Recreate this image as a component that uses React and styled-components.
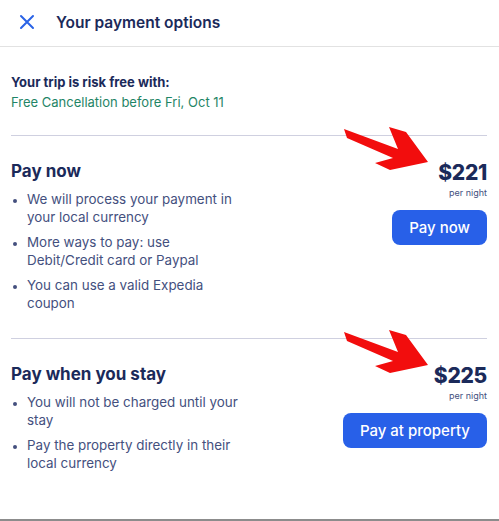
import React from "react";
import styled, { createGlobalStyle } from "styled-components";

const GlobalStyle = createGlobalStyle`
    html, body {
        margin: 0;
        padding: 0;
        background: #ffffff;
    }
    body {
        font-family: "Inter", "Noto Sans", sans-serif;
        -webkit-font-smoothing: antialiased;
    }
`;

const options = [
    {
        title: "Pay now",
        price: "$221",
        button: "Pay now",
        points: [
            "We will process your payment in your local currency",
            "More ways to pay: use Debit/Credit card or Paypal",
            "You can use a valid Expedia coupon",
        ],
    },
    {
        title: "Pay when you stay",
        price: "$225",
        button: "Pay at property",
        points: [
            "You will not be charged until your stay",
            "Pay the property directly in their local currency",
        ],
    },
];

const Arrow = () => (
    <ArrowSvg viewBox="0 0 86 44" width="86" height="44">
        <polygon
            points="0,2 54,22 45,0 62,5 84,35 46,43 31,36 49,31 3,11"
            fill="#f20d0d"
        />
    </ArrowSvg>
);

const App = () => {
    return (
        <>
            <GlobalStyle />
            <PageStyle>
                <HeaderStyle>
                    <CloseButtonStyle aria-label="Close">
                        <svg width="16" height="16" viewBox="0 0 16 16">
                            <path d="M2 2 L14 14 M14 2 L2 14" stroke="#2a63e6" strokeWidth="2" strokeLinecap="round" />
                        </svg>
                    </CloseButtonStyle>
                    <HeaderTitleStyle>Your payment options</HeaderTitleStyle>
                </HeaderStyle>

                <ContentStyle>
                    <RiskStyle>
                        <RiskTitleStyle>Your trip is risk free with:</RiskTitleStyle>
                        <RiskTextStyle>Free Cancellation before Fri, Oct 11</RiskTextStyle>
                    </RiskStyle>

                    {options.map((option) => (
                        <OptionStyle key={option.title}>
                            <OptionInfoStyle>
                                <OptionTitleStyle>{option.title}</OptionTitleStyle>
                                <PointListStyle>
                                    {option.points.map((point) => (
                                        <PointStyle key={point}>{point}</PointStyle>
                                    ))}
                                </PointListStyle>
                            </OptionInfoStyle>

                            <OptionPriceStyle>
                                <Arrow />
                                <PriceStyle>{option.price}</PriceStyle>
                                <PerNightStyle>per night</PerNightStyle>
                                <PayButtonStyle>{option.button}</PayButtonStyle>
                            </OptionPriceStyle>
                        </OptionStyle>
                    ))}
                </ContentStyle>
            </PageStyle>
        </>
    );
};

export default App;

// ==========================================   STYLES   ========================================== //

const PageStyle = styled.div`
    width: 499px;
    height: 521px;
    box-sizing: border-box;
    border-bottom: 2px solid #8c8c8c;
    background: #ffffff;
    color: #1b2a5a;
    overflow: hidden;
`;

const HeaderStyle = styled.div`
    height: 47px;
    box-sizing: border-box;
    border-bottom: 1px solid #e2e2e2;
    display: flex;
    align-items: center;
    gap: 21px;
    padding: 0 0 2px 19px;
`;

const CloseButtonStyle = styled.button`
    border: none;
    background: none;
    padding: 0;
    width: 16px;
    height: 16px;
    display: flex;
`;

const HeaderTitleStyle = styled.div`
    font-size: 15.5px;
    font-weight: 600;
    color: #1b2a5a;
`;

const ContentStyle = styled.div`
    padding: 0 12px 0 11px;
`;

const RiskStyle = styled.div`
    padding: 25px 0 23px;
    border-bottom: 1px solid #cfd0e0;
    display: flex;
    flex-direction: column;
`;

const RiskTitleStyle = styled.div`
    font-size: 13px;
    line-height: 20px;
    font-weight: 700;
    color: #1b2a5a;
`;

const RiskTextStyle = styled.div`
    font-size: 13px;
    line-height: 20px;
    color: #1f8566;
`;

const OptionStyle = styled.div`
    display: flex;
    justify-content: space-between;
    align-items: flex-start;
    padding: 23px 0 26px;
    border-bottom: 1px solid #cfd0e0;

    &:last-child {
        border-bottom: none;
    }
`;

const OptionInfoStyle = styled.div`
    display: flex;
    flex-direction: column;
    gap: 7px;
`;

const OptionTitleStyle = styled.div`
    font-size: 17px;
    line-height: 24px;
    font-weight: 700;
    color: #1b2a5a;
`;

const PointListStyle = styled.ul`
    margin: 0;
    padding: 0 0 0 16px;
    width: 216px;
    display: flex;
    flex-direction: column;
    gap: 7px;
`;

const PointStyle = styled.li`
    font-size: 13.4px;
    line-height: 18px;
    color: #44507e;

    &::marker {
        font-size: 11px;
    }
`;

const OptionPriceStyle = styled.div`
    position: relative;
    display: flex;
    flex-direction: column;
    align-items: flex-end;
`;

const ArrowSvg = styled.svg`
    position: absolute;
    top: -32px;
    right: 57px;
`;

const PriceStyle = styled.div`
    font-size: 21px;
    line-height: 28px;
    font-weight: 800;
    letter-spacing: -0.3px;
    color: #1b2a5a;
`;

const PerNightStyle = styled.div`
    font-size: 9px;
    line-height: 12px;
    color: #44507e;
`;

const PayButtonStyle = styled.button`
    margin-top: 11px;
    height: 35px;
    padding: 0 17px;
    border: none;
    border-radius: 8px;
    background: #2860e8;
    color: #ffffff;
    font-family: inherit;
    font-size: 15px;
    font-weight: 500;
    cursor: pointer;
`;
